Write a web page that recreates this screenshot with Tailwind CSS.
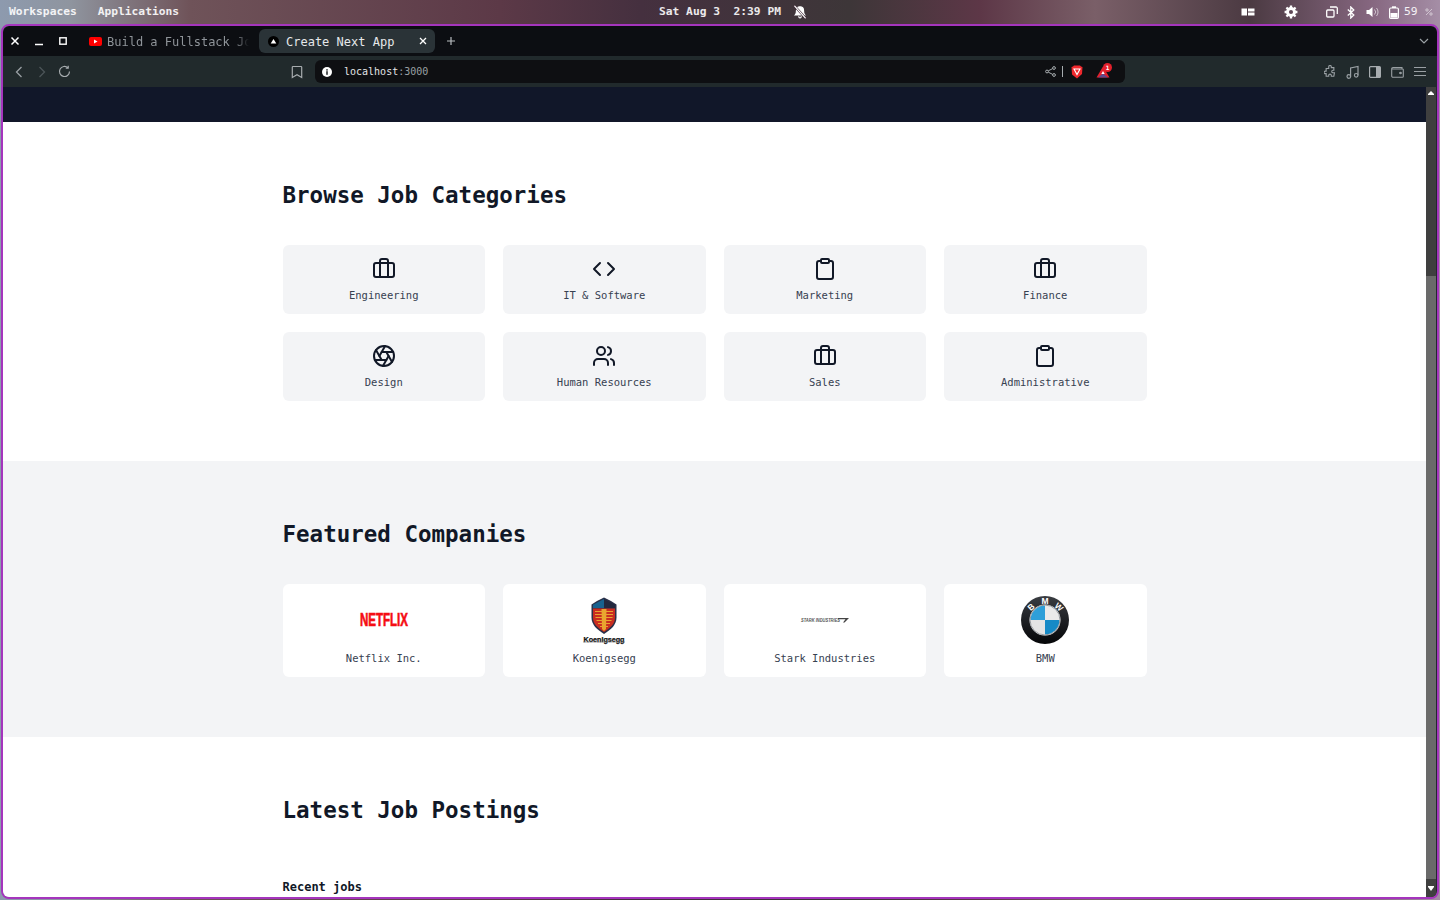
<!DOCTYPE html>
<html lang="en">
<head>
  <meta charset="UTF-8" />
  <title>Create Next App</title>
  <script src="https://cdn.jsdelivr.net/npm/@tailwindcss/browser@4"></script>
</head>
<body class="w-[1440px] h-[900px] overflow-hidden font-['DejaVu_Sans_Mono',monospace] bg-[linear-gradient(90deg,#8d9aae_0px,#8f959f_70px,#6f5359_190px,#5c3947_500px,#45303f_640px,#3d3638_850px,#5d3747_980px,#7a5f68_1095px,#4b3a42_1250px,#85667f_1370px,#a58ea6_1440px)]">

  <!-- desktop top bar -->
  <header class="h-[24px] flex items-center text-[11.25px] font-bold text-white/90 relative">
    <span class="ml-[9px]">Workspaces</span>
    <span class="ml-[21px]">Applications</span>
    <span class="ml-[480px] whitespace-pre">Sat Aug 3  2:39 PM</span>
    <svg class="ml-[12px] w-[14px] h-[14px]" viewBox="0 0 24 24" fill="#fff" stroke="#fff" stroke-width="2" stroke-linecap="round"><path d="M12 3a6 6 0 0 0-6 6c0 6-2 8-2 8h16s-2-2-2-8a6 6 0 0 0-6-6z"/><path d="M10 20a2 2 0 0 0 4 0" fill="none"/><path d="M3 2l18 20" stroke="#4a3340" stroke-width="4"/><path d="M3 2l18 20"/></svg>
    <svg class="ml-[434px] w-[14px] h-[10px]" viewBox="0 0 14 10" fill="#fff"><rect x="0.5" y="1.5" width="5.5" height="7"/><rect x="7" y="1.5" width="6.5" height="3"/><rect x="7" y="5.5" width="6.5" height="3"/></svg>
    <svg class="ml-[29px] w-[14px] h-[14px]" viewBox="0 0 24 24" fill="none" stroke="#fff" stroke-width="5"><circle cx="12" cy="12" r="6"/><path d="M12 1v4M12 19v4M1 12h4M19 12h4M4.2 4.2l3 3M16.800 16.800l3 3M4.200 19.800l3-3M16.800 7.200l3-3" stroke-width="4"/></svg>
    <svg class="ml-[28px] w-[12px] h-[12px]" viewBox="0 0 12 12" fill="none" stroke="#fff" stroke-width="1.300"><rect x="0.700" y="4" width="7.300" height="7" rx="1"/><path d="M4 1h6a1.300 1.300 0 0 1 1.300 1.300V8"/></svg>
    <svg class="ml-[9px] w-[8px] h-[13px]" viewBox="0 0 8 13" fill="none" stroke="#fff" stroke-width="1.300"><path d="M0.800 3.500l6 5.500-3 3V1l3 3-6 5.500"/></svg>
    <svg class="ml-[11px] w-[13px] h-[12px]" viewBox="0 0 13 12" fill="#fff"><path d="M0.500 4h2.500l3.500-3v10l-3.500-3H0.500z"/><path d="M8.500 3.500a3.500 3.500 0 0 1 0 5M10.500 2a6 6 0 0 1 0 8" fill="none" stroke="#fff" stroke-opacity=".6"/></svg>
    <svg class="ml-[10px] w-[10px] h-[13px]" viewBox="0 0 10 13" fill="none" stroke="#fff" stroke-width="1.200"><rect x="0.600" y="2" width="8.800" height="10.400" rx="1.200"/><rect x="3" y="0.300" width="4" height="1.700" fill="#fff" stroke="none"/><rect x="1.500" y="7" width="7" height="4.600" fill="#fff" stroke="none"/></svg>
    <span class="ml-[5px] font-normal">59</span>
    <svg class="ml-[8px] w-[8px] h-[8px]" viewBox="0 0 8 8" fill="none" stroke="#ffffff80"><path d="M1 7l6-6"/><circle cx="2" cy="2" r="1.200"/><circle cx="6" cy="6" r="1.200"/></svg>
  </header>

  <!-- browser window -->
  <div class="ml-[1px] w-[1438px] h-[875px] border-2 border-[#a535bd] rounded-[8px] overflow-hidden flex flex-col">

    <div class="h-[30px] bg-[#0c0e12] flex items-center shrink-0 text-[12px]">
      <span class="w-[24px] flex justify-center">
        <svg class="w-[10px] h-[10px]" viewBox="0 0 10 10" stroke="#fff" stroke-width="1.500"><path d="M1.500 1.500l7 7M8.500 1.500l-7 7"/></svg>
      </span>
      <span class="w-[24px] flex justify-center">
        <svg class="w-[10px] h-[10px]" viewBox="0 0 10 10" stroke="#fff" stroke-width="1.400"><path d="M1 8.500h8"/></svg>
      </span>
      <span class="w-[24px] flex justify-center">
        <svg class="w-[10px] h-[10px]" viewBox="0 0 10 10" fill="none" stroke="#fff" stroke-width="1.400"><rect x="1.800" y="1.800" width="6.400" height="6.400"/></svg>
      </span>
      <div class="ml-[4px] w-[176px] h-[24px] flex items-center pl-[10px] text-[#8f9499] overflow-hidden">
        <svg class="w-[13px] h-[9px] shrink-0" viewBox="0 0 13 9"><rect width="13" height="9" rx="2" fill="#f00"/><path d="M5 2.500v4l3.500-2z" fill="#fff"/></svg>
        <span class="ml-[5px] pt-px whitespace-nowrap w-[142px] overflow-hidden [mask-image:linear-gradient(90deg,#000_90%,transparent)]">Build a Fullstack Job</span>
      </div>
      <div class="ml-[4px] w-[176px] h-[24px] rounded-[6px] bg-[#2a3337] flex items-center pl-[9px] pr-[8px] text-[#e6e8ea]">
        <svg class="w-[11px] h-[11px] shrink-0" viewBox="0 0 11 11"><circle cx="5.500" cy="5.500" r="5.500" fill="#000"/><path d="M5.500 3L8.300 7.500H2.700z" fill="#fff"/></svg>
        <span class="ml-[7px] pt-px whitespace-nowrap">Create Next App</span>
        <svg class="ml-auto w-[8px] h-[8px]" viewBox="0 0 8 8" stroke="#fff" stroke-width="1.300"><path d="M1 1l6 6M7 1L1 7"/></svg>
      </div>
      <svg class="ml-[11px] w-[10px] h-[10px]" viewBox="0 0 10 10" stroke="#b9bdc0" stroke-width="1.200"><path d="M5 1v8M1 5h8"/></svg>
      <svg class="ml-auto mr-[8px] w-[10px] h-[7px]" viewBox="0 0 10 7" fill="none" stroke="#9aa0a4" stroke-width="1.200"><path d="M1 1l4 4 4-4"/></svg>
    </div>

    <div class="h-[31px] bg-[#212a2c] flex items-center shrink-0">
      <span class="ml-[4px] w-[23px] flex justify-center">
        <svg class="w-[14px] h-[14px]" viewBox="0 0 14 14" fill="none" stroke="#9aa0a4" stroke-width="1.300"><path d="M9.500 2L4.500 7l5 5"/></svg>
      </span>
      <span class="w-[23px] flex justify-center">
        <svg class="w-[14px] h-[14px]" viewBox="0 0 14 14" fill="none" stroke="#4c5558" stroke-width="1.300"><path d="M4.500 2l5 5-5 5"/></svg>
      </span>
      <span class="w-[23px] flex justify-center">
        <svg class="w-[13px] h-[13px]" viewBox="0 0 13 13" fill="none" stroke="#a7acaf" stroke-width="1.200"><path d="M11.500 6.500a5 5 0 1 1-1.600-3.700"/><path d="M10.200 0.800v2.400H7.800" stroke-width="1.200"/></svg>
      </span>
      <svg class="ml-[213px] w-[16px] h-[16px]" viewBox="0 0 16 16" fill="none" stroke="#a7acaf" stroke-width="1.200"><path d="M4 2.500h8a.7.7 0 0 1 .7.700V13.500L8 10.800l-4.700 2.700V3.200A.7.700 0 0 1 4 2.500z"/></svg>
      <div class="ml-[10px] w-[810px] h-[23px] rounded-[6px] bg-[#0e0f12] flex items-center text-[10px] text-[#e4e6e8]">
        <svg class="ml-[7px] w-[10px] h-[10px]" viewBox="0 0 10 10"><circle cx="5" cy="5" r="5" fill="#fff"/><rect x="4.300" y="4.200" width="1.400" height="3.600" fill="#0e0f12"/><rect x="4.300" y="2.200" width="1.400" height="1.400" fill="#0e0f12"/></svg>
        <span class="ml-[12px]">localhost<span class="text-[#9aa0a4]">:3000</span></span>
        <svg class="ml-auto w-[11px] h-[11px]" viewBox="0 0 11 11" fill="none" stroke="#a7acaf"><circle cx="2" cy="5.500" r="1.400"/><circle cx="9" cy="2" r="1.400"/><circle cx="9" cy="9" r="1.400"/><path d="M3.300 4.800l4.400-2.200M3.300 6.200l4.400 2.200"/></svg>
        <span class="ml-[6px] w-px h-[11px] bg-[#a7acaf]"></span>
        <svg class="ml-[8px] w-[12px] h-[14px]" viewBox="0 0 12 14"><path d="M3 0.500h6l1 1 1.500.500-.500 7L6 13.500 1 9.500.500 2 2 1.500z" fill="#f0282d"/><path d="M3 4h6L6 9.500z" fill="none" stroke="#fff" stroke-width="1.100"/></svg>
        <span class="ml-[13px] mr-[15px] relative w-[14px] h-[14px]">
          <svg class="w-[14px] h-[14px]" viewBox="0 0 14 14"><path d="M7 1.500L13.500 12.500H.5z" fill="#e3202c"/><path d="M2 12.500l5-4 5 4z" fill="#5c4b8c"/><path d="M7 6l1.700 3H5.300z" fill="#fff"/></svg>
          <span class="absolute -top-[2px] left-[7px] w-[9px] h-[9px] rounded-full bg-[#e3202c] text-white text-[6px] leading-[9px] text-center font-bold">1</span>
        </span>
      </div>
      <svg class="ml-[199px] w-[12px] h-[13px]" viewBox="0 0 14 14" fill="none" stroke="#9aa0a4" stroke-width="1.300"><path d="M5.500 1.500a1.500 1.500 0 0 1 3 0v1h3v3h-1a1.500 1.500 0 0 0 0 3h1.700l-.7 4H8.500v-1a1.500 1.500 0 0 0-3 0v1H2.500v-3h-1a1.500 1.500 0 0 1 0-3h1v-3h3z"/></svg>
      <svg class="ml-[10px] w-[13px] h-[14px]" viewBox="0 0 13 14" fill="none" stroke="#9aa0a4" stroke-width="1.200"><circle cx="2.800" cy="11.500" r="1.800"/><circle cx="10.200" cy="10.300" r="1.800"/><path d="M4.600 11.500V3L12 1.500v8.800"/></svg>
      <svg class="ml-[10px] w-[12px] h-[12px]" viewBox="0 0 12 12"><rect x="0.600" y="0.600" width="10.800" height="10.800" rx="1" fill="none" stroke="#a7acaf" stroke-width="1.200"/><rect x="7" y="1" width="4" height="10" fill="#a7acaf"/></svg>
      <svg class="ml-[10px] w-[13px] h-[12px]" viewBox="0 0 13 12" fill="none" stroke="#9aa0a4" stroke-width="1.100"><path d="M11 3V1.500H2a1.300 1.300 0 0 0-1.300 1.300V10A1.300 1.300 0 0 0 2 11.300h9.500A.8.800 0 0 0 12.300 10.500V3.800A.8.800 0 0 0 11.500 3H1"/><circle cx="9.500" cy="7" r=".8" fill="#9aa0a4"/></svg>
      <svg class="ml-[10px] w-[12px] h-[11px]" viewBox="0 0 12 11" stroke="#9aa0a4" stroke-width="1.200"><path d="M0 1.500h12M0 5.500h12M0 9.500h12"/></svg>
    </div>

    <div class="flex-1 min-h-0 flex">
      <main class="flex-1 min-w-0 overflow-hidden bg-white">
        <div class="h-[35px] bg-[#111729]"></div>

        <section class="py-[60px]">
          <div class="w-[864px] mx-auto">
            <h2 class="text-[22.5px] leading-[27px] font-bold text-[#111827] mb-[36px]">Browse Job Categories</h2>
            <div class="grid grid-cols-4 gap-[18px] text-[10.5px] leading-[15px] text-[#374151]">
              <div class="h-[69px] rounded-[6px] bg-[#f3f4f6] pt-[12px] flex flex-col items-center gap-[7px]">
                <svg class="w-[24px] h-[24px]" viewBox="0 0 24 24" fill="none" stroke="#111827" stroke-width="2" stroke-linecap="round" stroke-linejoin="round"><rect width="20" height="14" x="2" y="6" rx="2"/><path d="M16 20V4a2 2 0 0 0-2-2h-4a2 2 0 0 0-2 2v16"/></svg>
                <span>Engineering</span>
              </div>
              <div class="h-[69px] rounded-[6px] bg-[#f3f4f6] pt-[12px] flex flex-col items-center gap-[7px]">
                <svg class="w-[24px] h-[24px]" viewBox="0 0 24 24" fill="none" stroke="#111827" stroke-width="2" stroke-linecap="round" stroke-linejoin="round"><polyline points="16 18 22 12 16 6"/><polyline points="8 6 2 12 8 18"/></svg>
                <span>IT &amp; Software</span>
              </div>
              <div class="h-[69px] rounded-[6px] bg-[#f3f4f6] pt-[12px] flex flex-col items-center gap-[7px]">
                <svg class="w-[24px] h-[24px]" viewBox="0 0 24 24" fill="none" stroke="#111827" stroke-width="2" stroke-linecap="round" stroke-linejoin="round"><rect width="8" height="4" x="8" y="2" rx="1" ry="1"/><path d="M16 4h2a2 2 0 0 1 2 2v14a2 2 0 0 1-2 2H6a2 2 0 0 1-2-2V6a2 2 0 0 1 2-2h2"/></svg>
                <span>Marketing</span>
              </div>
              <div class="h-[69px] rounded-[6px] bg-[#f3f4f6] pt-[12px] flex flex-col items-center gap-[7px]">
                <svg class="w-[24px] h-[24px]" viewBox="0 0 24 24" fill="none" stroke="#111827" stroke-width="2" stroke-linecap="round" stroke-linejoin="round"><rect width="20" height="14" x="2" y="6" rx="2"/><path d="M16 20V4a2 2 0 0 0-2-2h-4a2 2 0 0 0-2 2v16"/></svg>
                <span>Finance</span>
              </div>
              <div class="h-[69px] rounded-[6px] bg-[#f3f4f6] pt-[12px] flex flex-col items-center gap-[7px]">
                <svg class="w-[24px] h-[24px]" viewBox="0 0 24 24" fill="none" stroke="#111827" stroke-width="2" stroke-linecap="round" stroke-linejoin="round"><circle cx="12" cy="12" r="10"/><path d="m14.310 8 5.740 9.940"/><path d="M9.690 8h11.480"/><path d="m7.380 12 5.740-9.940"/><path d="M9.690 16 3.950 6.060"/><path d="M14.310 16H2.830"/><path d="m16.620 12-5.740 9.940"/></svg>
                <span>Design</span>
              </div>
              <div class="h-[69px] rounded-[6px] bg-[#f3f4f6] pt-[12px] flex flex-col items-center gap-[7px]">
                <svg class="w-[24px] h-[24px]" viewBox="0 0 24 24" fill="none" stroke="#111827" stroke-width="2" stroke-linecap="round" stroke-linejoin="round"><path d="M16 21v-2a4 4 0 0 0-4-4H6a4 4 0 0 0-4 4v2"/><circle cx="9" cy="7" r="4"/><path d="M22 21v-2a4 4 0 0 0-3-3.870"/><path d="M16 3.130a4 4 0 0 1 0 7.750"/></svg>
                <span>Human Resources</span>
              </div>
              <div class="h-[69px] rounded-[6px] bg-[#f3f4f6] pt-[12px] flex flex-col items-center gap-[7px]">
                <svg class="w-[24px] h-[24px]" viewBox="0 0 24 24" fill="none" stroke="#111827" stroke-width="2" stroke-linecap="round" stroke-linejoin="round"><rect width="20" height="14" x="2" y="6" rx="2"/><path d="M16 20V4a2 2 0 0 0-2-2h-4a2 2 0 0 0-2 2v16"/></svg>
                <span>Sales</span>
              </div>
              <div class="h-[69px] rounded-[6px] bg-[#f3f4f6] pt-[12px] flex flex-col items-center gap-[7px]">
                <svg class="w-[24px] h-[24px]" viewBox="0 0 24 24" fill="none" stroke="#111827" stroke-width="2" stroke-linecap="round" stroke-linejoin="round"><rect width="8" height="4" x="8" y="2" rx="1" ry="1"/><path d="M16 4h2a2 2 0 0 1 2 2v14a2 2 0 0 1-2 2H6a2 2 0 0 1-2-2V6a2 2 0 0 1 2-2h2"/></svg>
                <span>Administrative</span>
              </div>
            </div>
          </div>
        </section>

        <section class="py-[60px] bg-[#f3f4f6]">
          <div class="w-[864px] mx-auto">
            <h2 class="text-[22.5px] leading-[27px] font-bold text-[#111827] mb-[36px]">Featured Companies</h2>
            <div class="grid grid-cols-4 gap-[18px] text-[10.5px] leading-[15px] text-[#374151]">
              <div class="h-[93px] rounded-[6px] bg-white pt-[12px] flex flex-col items-center gap-[7px]">
                <svg class="w-[48px] h-[48px] overflow-visible" viewBox="0 0 48 48"><text x="0" y="29.500" textLength="48" lengthAdjust="spacingAndGlyphs" font-family="Liberation Sans Narrow, Liberation Sans, sans-serif" font-weight="700" font-size="19" fill="#f50d14" stroke="#f50d14" stroke-width=".7">NETFLIX</text></svg>
                <span>Netflix Inc.</span>
              </div>
              <div class="h-[93px] rounded-[6px] bg-white pt-[12px] flex flex-col items-center gap-[7px]">
                <svg class="w-[48px] h-[48px] overflow-visible" viewBox="0 0 48 48">
                  <path d="M24 1.500l7 3.500 5.500 3.500v13c0 7.500-5.500 12-12.500 16.500-7-4.500-12.500-9-12.500-16.500v-13L17 5z" fill="#2a3049"/>
                  <path d="M13 8.800l11-5.800v9H13z" fill="#17628f"/>
                  <path d="M24 3v9h11V8.800z" fill="#23283e"/>
                  <path d="M13 12.500h22v9c0 6.500-5 10.500-11 14.500-6-4-11-8-11-14.500z" fill="#c92d20"/>
                  <path d="M15 15.500h18M15 18.500h18M15.500 21.500h17M16.500 24.500h15M18 27.500h12M20 30.500h8" stroke="#e9a52f" stroke-width="1.100"/>
                  <path d="M21.500 13h5l-.5 20-2 2-2-2z" fill="#e9a52f"/>
                  <text x="24" y="45.500" text-anchor="middle" textLength="41" lengthAdjust="spacingAndGlyphs" font-family="Liberation Sans, sans-serif" font-weight="700" font-size="6.500" fill="#111" stroke="#111" stroke-width=".25">Koenigsegg</text>
                  <path d="M3 46h42" stroke="#777" stroke-width=".6"/>
                </svg>
                <span>Koenigsegg</span>
              </div>
              <div class="h-[93px] rounded-[6px] bg-white pt-[12px] flex flex-col items-center gap-[7px]">
                <svg class="w-[48px] h-[48px] overflow-visible" viewBox="0 0 48 48">
                  <text x="0" y="25.800" textLength="39" lengthAdjust="spacingAndGlyphs" font-family="Liberation Sans, sans-serif" font-weight="700" font-style="italic" font-size="4.500" fill="#555">STARK INDUSTRIES</text>
                  <path d="M37 22h11l-4.500 4.500h-1.500l2.500-3.300h-7.500z" fill="#444"/>
                </svg>
                <span>Stark Industries</span>
              </div>
              <div class="h-[93px] rounded-[6px] bg-white pt-[12px] flex flex-col items-center gap-[7px]">
                <svg class="w-[48px] h-[48px] overflow-visible" viewBox="0 0 48 48">
                  <defs>
                    <linearGradient id="ring" x1="0" y1="0" x2="0" y2="1"><stop offset="0" stop-color="#3a3d42"/><stop offset=".5" stop-color="#1e2024"/><stop offset="1" stop-color="#050608"/></linearGradient>
                  </defs>
                  <circle cx="24" cy="24" r="24" fill="url(#ring)"/>
                  <circle cx="24" cy="24" r="15.500" fill="#fff"/>
                  <path d="M24 24V9.500A14.500 14.500 0 0 0 9.500 24z" fill="#2e9fd9"/>
                  <path d="M24 24v14.500A14.500 14.500 0 0 0 38.500 24z" fill="#168ac6"/>
                  <path d="M24 24V9.500A14.500 14.500 0 0 1 38.500 24z" fill="#eaeaea"/>
                  <path d="M24 24v14.500A14.500 14.500 0 0 1 9.500 24z" fill="#e4e4e4"/>
                  <circle cx="24" cy="24" r="15" fill="none" stroke="#7d8388" stroke-width=".8"/>
                  <g font-family="Liberation Sans, sans-serif" font-weight="700" font-size="8.500" fill="#fff" text-anchor="middle">
                    <text transform="translate(10 11) rotate(-42)" y="3">B</text>
                    <text x="24" y="8">M</text>
                    <text transform="translate(38 11) rotate(42)" y="3">W</text>
                  </g>
                </svg>
                <span>BMW</span>
              </div>
            </div>
          </div>
        </section>

        <section class="pt-[60px]">
          <div class="w-[864px] mx-auto">
            <h2 class="text-[22.5px] leading-[27px] font-bold text-[#111827]">Latest Job Postings</h2>
            <p class="mt-[54px] text-[12px] leading-[18px] font-bold text-[#111827]">Recent jobs</p>
          </div>
        </section>
      </main>

      <!-- page scrollbar -->
      <div class="w-[11px] shrink-0 bg-[#212a2c] flex">
        <div class="w-[10px] bg-[#3f3f3f] flex flex-col items-center">
          <svg class="mt-[4px] w-[6px] h-[5px] shrink-0" viewBox="0 0 6 5" fill="#fff"><path d="M3 0l3 3v1H0V3z"/></svg>
          <div class="mt-[180px] w-full flex-1 bg-[#6a6a6a]"></div>
          <div class="h-[18px] w-full flex justify-center items-center">
            <svg class="w-[6px] h-[5px]" viewBox="0 0 6 5" fill="#fff"><path d="M0 0h6v1L3 5 0 1z"/></svg>
          </div>
        </div>
      </div>
    </div>
  </div>
</body>
</html>
